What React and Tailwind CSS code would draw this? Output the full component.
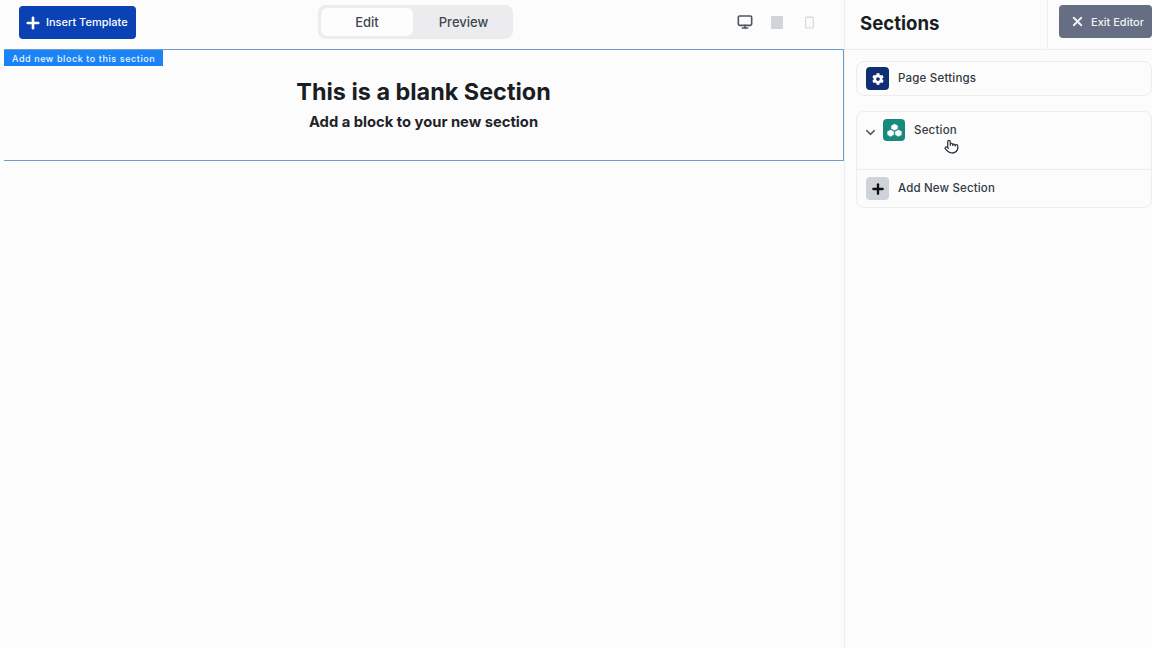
import { ChevronDown, Monitor, Plus, Pointer, Smartphone, X } from 'lucide-react';
import { FaCog } from 'react-icons/fa';

function TabletIcon() {
  return <div className="w-3 h-[13px] rounded-[1px] bg-[#cfd4da]" />;
}

function SectionLogo() {
  return (
    <svg width="17" height="15" viewBox="0 0 17 15" fill="white" stroke="#168a7b" strokeWidth="0.7">
      <path d="M8.5 0.6l3.6 1.8v3.6L8.5 7.8 4.9 6V2.4z" />
      <path d="M4.6 6.4l3.6 1.8v3.8l-3.6 1.9L1 12V8.2z" />
      <path d="M12.4 6.4L16 8.2V12l-3.6 1.9L8.8 12V8.2z" />
    </svg>
  );
}

function TopBar() {
  return (
    <div className="relative h-[49px] flex items-start justify-between pl-[19px] pr-[28px]">
      <button className="mt-[6px] h-[33px] w-[117px] rounded bg-[#0a41b4] text-white flex items-center gap-[4px] pl-[5px] text-[11px] font-medium">
        <Plus size={18} strokeWidth={3.5} />
        Insert Template
      </button>
      <div className="absolute left-[318px] top-[5px] w-[195px] h-[34px] rounded-lg bg-[#ececee] flex items-center p-[3px] text-[13px] font-medium text-[#3d4852]">
        <div className="w-[92px] h-[28px] rounded-md bg-[#fdfdfd] flex items-center justify-center pt-[1px]">Edit</div>
        <div className="flex-1 flex items-center justify-center pl-1 pt-[1px]">Preview</div>
      </div>
      <div className="mt-[14px] flex items-center gap-[18px]">
        <Monitor size={16} strokeWidth={2.4} className="text-[#4b5563]" />
        <TabletIcon />
        <Smartphone size={13} className="ml-[2px] text-[#d1d5db]" />
      </div>
    </div>
  );
}

function Canvas() {
  return (
    <div className="relative ml-1 h-[112px] border-y border-[#6d9bd0] border-r flex flex-col items-center pt-[27px]">
      <div className="absolute left-0 top-0 h-4 w-[159px] bg-[#1a83f5] text-[#eef5ff] text-[9px] tracking-[0.58px] font-medium pl-2 pt-[1px] flex items-center">
        Add new block to this section
      </div>
      <h1 className="text-[23.4px] leading-[30px] font-bold text-[#1a1e23]">This is a blank Section</h1>
      <p className="mt-[5px] text-[14.75px] leading-[20px] font-bold text-[#1f2328]">Add a block to your new section</p>
    </div>
  );
}

function Sidebar() {
  return (
    <aside className="w-[308px] shrink-0 border-l border-[#eeeeef] flex flex-col">
      <div className="h-[50px] border-b border-[#eeeeef] flex">
        <div className="flex-1 pl-[15px] pt-[10px] text-[18.6px] leading-[26px] font-bold text-[#1a1e23] border-r border-[#eeeeef]">
          Sections
        </div>
        <div className="w-[104px] pl-[11px] pt-[5px]">
          <button className="w-[93px] h-[33px] rounded bg-[#656e83] text-[#f1f2f4] text-[11px] font-medium flex items-center gap-[6px] pl-[11px]">
            <X size={15} strokeWidth={3} />
            <span className="pt-[1px]">Exit Editor</span>
          </button>
        </div>
      </div>
      <div className="pl-[11px] pt-[11px] flex flex-col gap-[15px]">
        <div className="h-[35px] rounded-lg border border-[#ededee] flex items-center pl-[9px] gap-[9px] text-[11.5px] font-medium text-[#333a42] tracking-[0.2px]">
          <div className="w-[23px] h-[23px] rounded bg-[#0f2f74] flex items-center justify-center text-white">
            <FaCog size={12} />
          </div>
          Page Settings
        </div>
        <div className="rounded-lg border border-[#ededee]">
          <div className="relative h-[58px] border-b border-[#ededee] flex items-start pl-[6px] pt-[7px] text-[11.5px] font-medium text-[#333a42] tracking-[0.2px]">
            <ChevronDown size={15} strokeWidth={2.5} className="text-[#5b6169] mt-[6px]" />
            <div className="ml-[5px] w-[22px] h-[22px] rounded bg-[#168a7b] flex items-center justify-center">
              <SectionLogo />
            </div>
            <span className="ml-[9px] mt-[3px]">Section</span>
            <Pointer size={15} strokeWidth={2} className="absolute left-[87px] top-[27px] text-[#333a42] fill-white" />
          </div>
          <div className="h-[37px] flex items-center pl-[9px] gap-[9px] text-[11.5px] font-medium text-[#333a42] tracking-[0.15px]">
            <div className="w-[23px] h-[23px] rounded bg-[#ced3d9] flex items-center justify-center text-[#111]">
              <Plus size={16} strokeWidth={3.5} />
            </div>
            Add New Section
          </div>
        </div>
      </div>
    </aside>
  );
}

export default function App() {
  return (
    <div className="h-[648px] w-[1152px] overflow-hidden flex bg-[#fcfcfd] font-['Inter',sans-serif]">
      <main className="flex-1 min-w-0">
        <TopBar />
        <Canvas />
      </main>
      <Sidebar />
    </div>
  );
}
